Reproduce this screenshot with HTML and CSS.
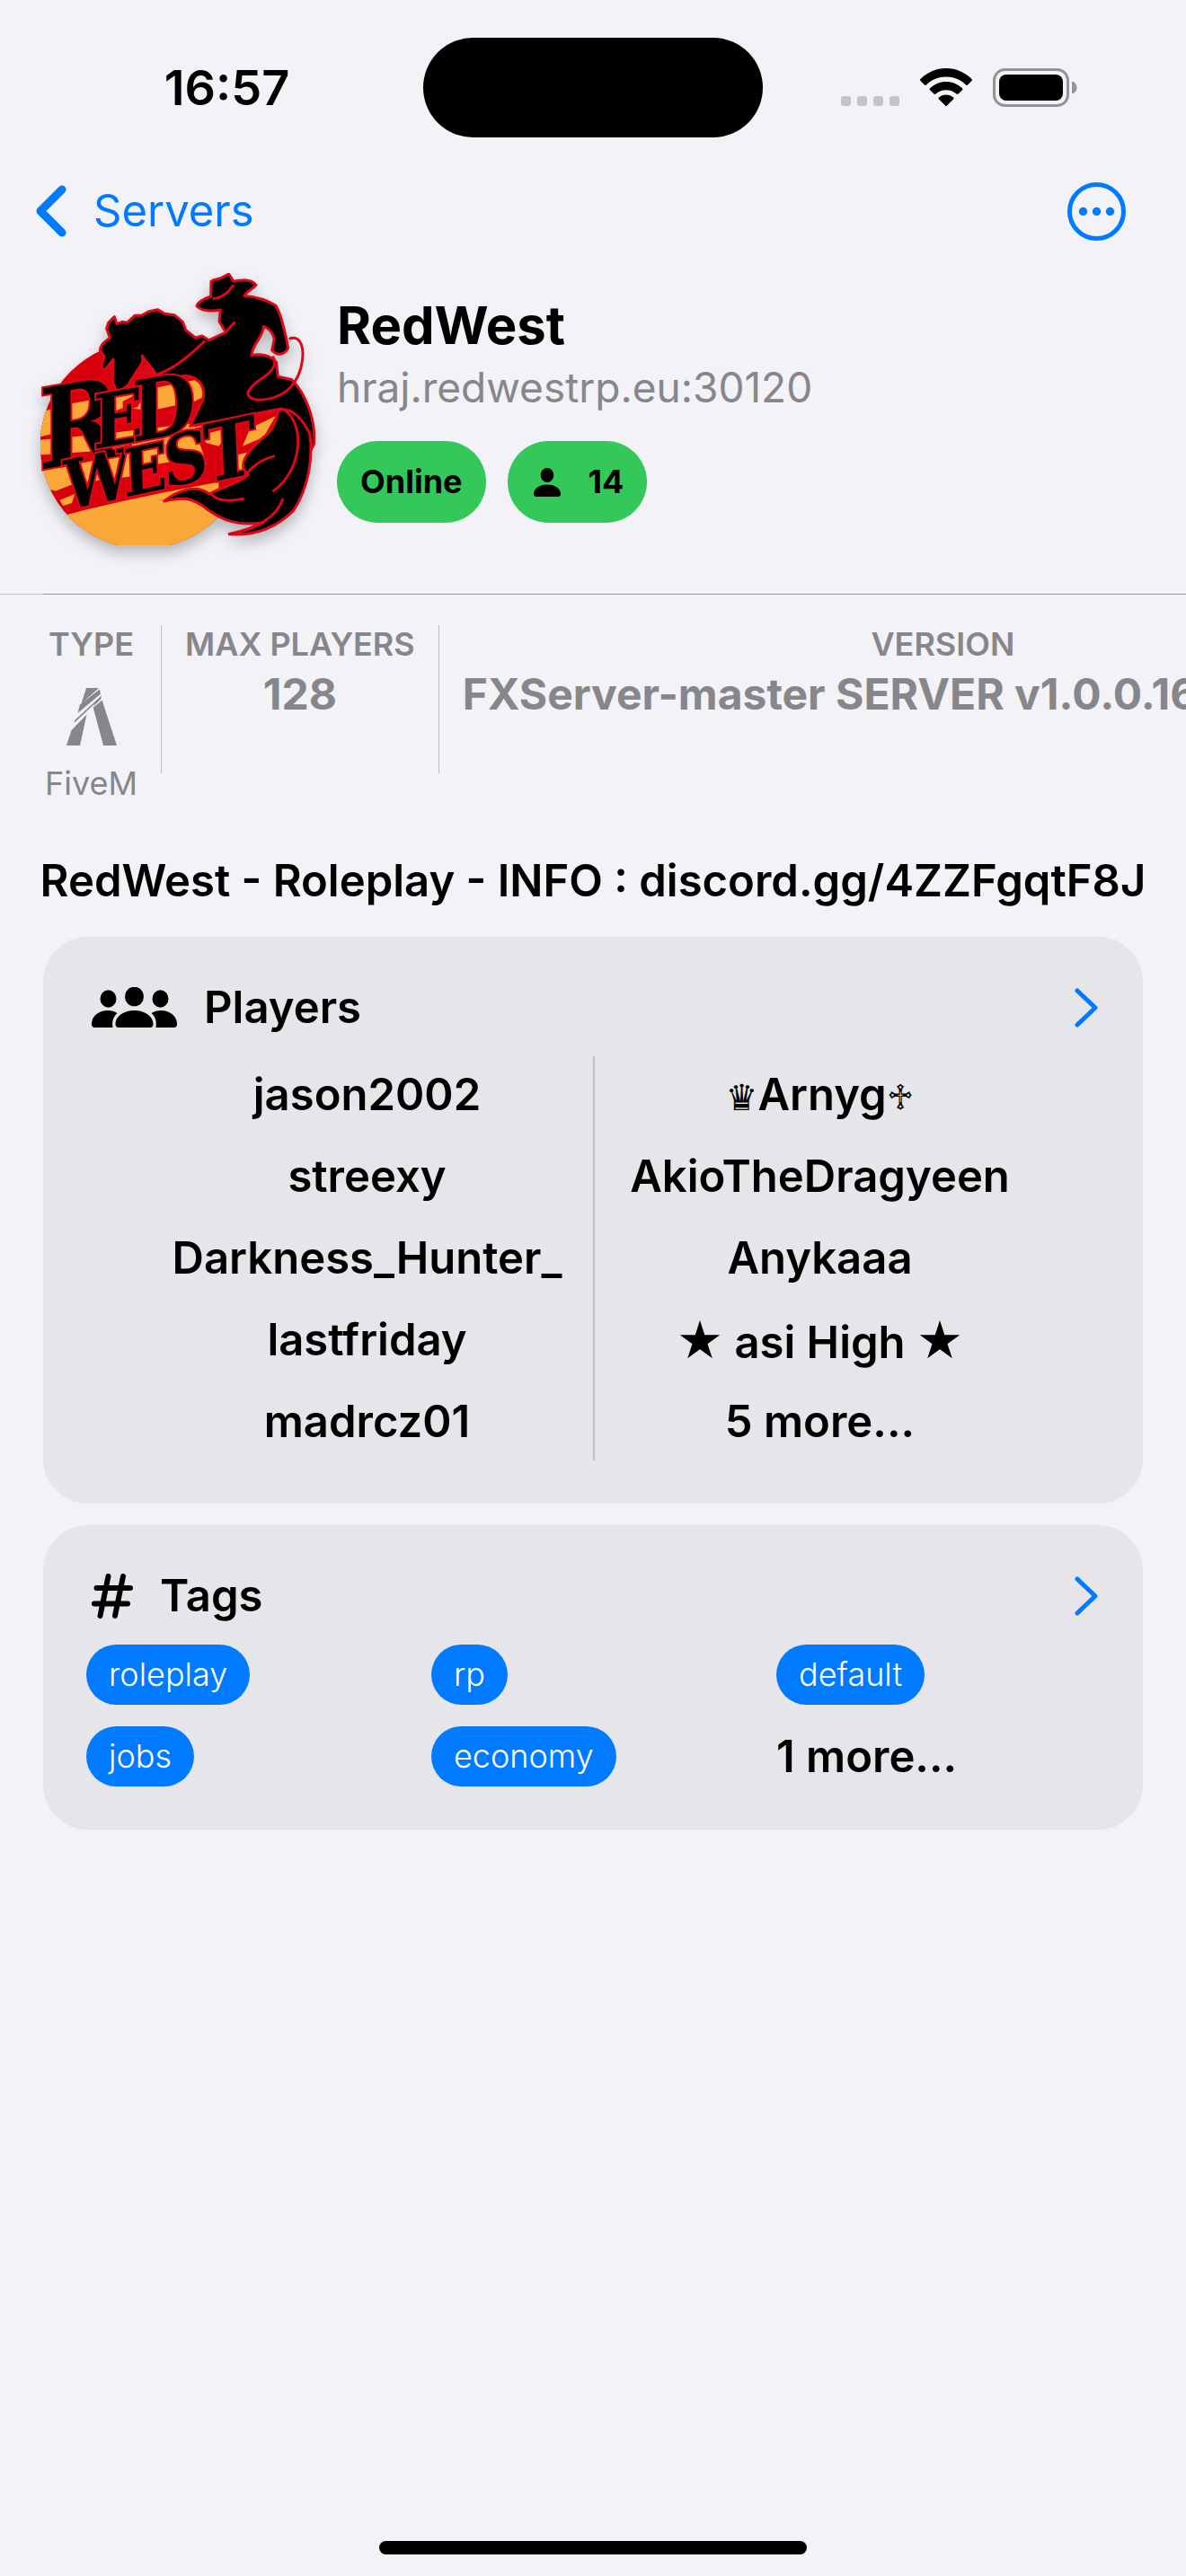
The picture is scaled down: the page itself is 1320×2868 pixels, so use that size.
FILE: index.html
```html
<!DOCTYPE html>
<html lang="en">
<head>
<meta charset="utf-8">
<meta name="viewport" content="width=device-width, initial-scale=1">
<title>RedWest</title>
<link rel="stylesheet" href="styles.css">
</head>
<body>
<header class="status">
  <time class="status-time">16:57</time>
  <div class="island"></div>
  <div class="status-icons">
    <svg class="cell" width="65" height="12" viewBox="0 0 65 12" aria-hidden="true"><rect width="11" height="11" rx="3"/><rect x="18" width="11" height="11" rx="3"/><rect x="36" width="11" height="11" rx="3"/><rect x="54" width="11" height="11" rx="3"/></svg>
    <svg class="wifi" width="58" height="43" viewBox="0 0 58 43" aria-hidden="true"><path d="M29 0C40 0 50 4.500 57.500 12Q58.500 13 57.500 14L53 18.500Q52 19.300 51 18.400C45 12.600 37.500 9.500 29 9.500S13 12.600 7 18.400Q6 19.300 5 18.500L.5 14Q-.5 13 .5 12C8 4.500 18 0 29 0Z"/><path d="M29 15C36 15 42 17.600 47 22.300Q48 23.300 47 24.300L42.500 28.600Q41.500 29.400 40.500 28.600C37.300 25.700 33.500 24.200 29 24.200S20.700 25.700 17.500 28.600Q16.500 29.400 15.500 28.600L11 24.300Q10 23.300 11 22.300C16 17.600 22 15 29 15Z"/><path d="M29 29.500C32.200 29.500 34.800 30.600 37 32.600Q38 33.600 37 34.600L30 41.600Q29 42.600 28 41.600L21 34.600Q20 33.600 21 32.600C23.200 30.600 25.800 29.500 29 29.500Z"/></svg>
    <svg class="battery" width="94" height="43" viewBox="0 0 94 43" aria-hidden="true"><rect x="1.500" y="1.500" width="82" height="40" rx="12" fill="none" stroke="#949497" stroke-width="3"/><rect x="7" y="7" width="71" height="29" rx="8"/><path d="M88 14.500C91.500 15.500 93.500 18 93.500 21.500S91.500 27.500 88 28.500Z" fill="#949497"/></svg>
  </div>
</header>

<nav class="nav">
  <a class="back" href="#servers"><svg width="34" height="58" viewBox="0 0 34 58" aria-hidden="true"><path d="M29 5 5 29 29 53"/></svg>Servers</a>
  <button class="more" type="button" aria-label="More"><svg width="65" height="65" viewBox="0 0 65 65" aria-hidden="true"><circle cx="32.500" cy="32.500" r="30" fill="none" stroke="currentColor" stroke-width="5"/><g fill="currentColor"><circle cx="17.500" cy="32.500" r="4.700"/><circle cx="32.500" cy="32.500" r="4.700"/><circle cx="47.500" cy="32.500" r="4.700"/></g></svg></button>
</nav>

<main>
  <section class="server">
    <svg class="logo" width="306" height="303" viewBox="45 42 918 909" role="img" aria-label="RedWest logo">
      <defs><clipPath id="sun"><circle cx="390" cy="616" r="346"/></clipPath></defs>
      <g clip-path="url(#sun)">
        <rect x="40" y="260" width="720" height="700" fill="#d9000d"/>
        <path fill="#fca838" d="M40 510 110 485 300 450 560 400 620 440 560 470 330 520 40 590ZM40 600 250 580 760 520 740 580 400 625 40 650ZM40 705 160 682 600 590 740 640 520 700 160 745 95 770 60 760ZM110 800 160 780 150 810 120 820ZM130 850C260 815 420 780 640 740V960H100Z"/>
        <path fill="#e8000f" d="M220 530 300 500 330 490 420 505 350 540 230 550ZM380 690 520 665 590 690 430 730 370 770ZM320 470 400 430 370 490 320 500Z"/>
      </g>
      <path d="M560 560 850 500 830 640 720 740 620 740Z" fill="#d9000d"/>
      <path d="M575 585 690 555 640 620 600 610ZM745 560 830 520 790 590 720 620ZM700 650 740 640 715 720 690 725Z" fill="#fca838"/>
      <g stroke="#dc0718" stroke-width="9" stroke-linejoin="round">
        <path d="M244 300C245 280 262 270 277 258L266 228 272 208 292 188 300 212 318 205 334 208 360 184 382 184 408 170 436 164 460 178 492 182 520 205 530 232 562 258 585 252 608 266 664 240 642 204 646 166C610 172 580 166 567 152 574 134 596 126 614 120L615 70C626 60 645 64 656 54L674 45 690 70C715 64 752 62 765 82 755 96 738 96 726 118 770 122 804 134 831 151 850 180 855 220 866 260L872 293C862 312 838 322 818 300L826 262C820 238 808 226 790 220 788 260 752 278 750 318 778 308 815 318 833 340L838 388 885 398C930 445 962 525 960 610L945 640 850 500 545 553 585 470C600 430 580 390 530 385L440 400 430 380C415 350 398 345 385 318 392 345 372 358 360 380L342 412 318 432 300 438 286 405 288 330 262 364 248 360 258 320Z"/>
        <path d="M342 408Q370 360 402 350L432 385Z" fill="#dc0718"/>
        <g fill="none">
          <path d="M272 440C350 430 400 395 450 375S545 315 595 268"/>
          <path d="M620 128Q660 125 690 82M665 238 695 205"/>
          <path d="M875 262C905 250 926 275 920 330 912 400 870 465 770 466 710 455 745 420 790 390 820 370 838 345 820 320"/>
        </g>
        <path d="M840 500C880 490 915 520 945 580 955 660 940 760 890 835 830 895 760 920 676 914 740 902 760 890 790 875 700 890 650 865 600 830 550 790 520 790 458 804 500 770 560 745 610 780 640 760 700 750 740 715 700 690 730 640 790 590 830 560 830 530 840 500Z"/>
        <g fill="none"><path d="M560 552 850 495C930 530 925 700 820 772M610 775Q640 815 725 795M725 725Q760 670 828 653M855 795Q825 885 672 914"/></g>
      </g>
      <g class="logo-word" stroke-width="12" paint-order="stroke">
        <text transform="translate(62 695) rotate(-10)" font-size="365">R</text>
        <text transform="translate(236 628) rotate(-10)" font-size="245">E</text>
        <text transform="translate(368 604) rotate(-10)" font-size="275">D</text>
        <text transform="translate(140 832) rotate(-12)" font-size="225">W</text>
        <text transform="translate(338 788) rotate(-12)" font-size="215">E</text>
        <text transform="translate(474 756) rotate(-12)" font-size="230">S</text>
        <text transform="translate(610 742) rotate(-12)" font-size="265">T</text>
      </g>
    </svg>
    <div class="server-text">
      <h1>RedWest</h1>
      <p class="address">hraj.redwestrp.eu:30120</p>
      <div class="badges">
        <span class="badge">Online</span>
        <span class="badge"><svg width="36" height="32" viewBox="0 0 36 32" aria-hidden="true"><ellipse cx="18" cy="8" rx="7.300" ry="8"/><path d="M6 32Q3 32 3 29C3 23 9.500 18.500 18 18.500S33 23 33 29Q33 32 30 32Z"/></svg>14</span>
      </div>
    </div>
  </section>

  <hr class="rule">

  <dl class="stats">
    <div class="stat"><dt>TYPE</dt><dd class="platform"><svg width="56" height="64" viewBox="0 0 56 64" aria-hidden="true"><path d="M22 0H36L16.500 17.500ZM36.800 1.500 38 6.500 12.500 28 15 18.500ZM38.300 9 38.600 10.500 8.500 39 9.500 35.500ZM38.500 12 28 22.500 38.500 8ZM29.800 22 39.600 13.500 56 64H41ZM22.500 29.500 15 64H0L5.500 47Z"/></svg>FiveM</dd></div>
    <div class="stat"><dt>MAX PLAYERS</dt><dd>128</dd></div>
    <div class="stat"><dt>VERSION</dt><dd>FXServer-master SERVER v1.0.0.16085 win32</dd></div>
  </dl>

  <p class="description">RedWest - Roleplay - INFO : discord.gg/4ZZFgqtF8J</p>

  <section class="card">
    <a class="card-head" href="#players">
      <svg width="95" height="46" viewBox="0 0 95 46" aria-hidden="true"><ellipse cx="18.500" cy="13" rx="9" ry="9.700"/><ellipse cx="76.500" cy="13" rx="9" ry="9.700"/><ellipse cx="47.500" cy="10.500" rx="10.500" ry="10.800"/><path d="M3.500 45Q0 45 0 41C0 33 7 26 18 26Q24 26 28.500 29C24 33 22.500 38 23.500 45ZM91.500 45Q95 45 95 41C95 33 88 26 77 26Q71 26 66.500 29C71 33 72.500 38 71.500 45ZM30 45Q26.500 45 26.500 41C26.500 33 35 26 47.500 26S68.500 33 68.500 41Q68.500 45 65 45Z"/></svg>
      <h2>Players</h2>
      <svg class="chevron" width="26" height="44" viewBox="0 0 26 44" aria-hidden="true"><path d="M3 3 23 22 3 41"/></svg>
    </a>
    <div class="players">
      <ul><li>jason2002</li><li>streexy</li><li>Darkness_Hunter_</li><li>lastfriday</li><li>madrcz01</li></ul>
      <ul><li><span class="glyph">♛</span>Arnyg<span class="glyph">♱</span></li><li>AkioTheDragyeen</li><li>Anykaaa</li><li><span class="star">★</span> asi High <span class="star">★</span></li><li>5 more...</li></ul>
    </div>
  </section>

  <section class="card">
    <a class="card-head" href="#tags">
      <svg width="46" height="50" viewBox="0 0 46 50" aria-hidden="true"><path d="M5.500 16H43M3 33.500H40M18.500 3 9.500 47M35 3 26 47" fill="none" stroke="#000" stroke-width="6" stroke-linecap="round"/></svg>
      <h2>Tags</h2>
      <svg class="chevron" width="26" height="44" viewBox="0 0 26 44" aria-hidden="true"><path d="M3 3 23 22 3 41"/></svg>
    </a>
    <ul class="tags"><li><span class="tag">roleplay</span></li><li><span class="tag">rp</span></li><li><span class="tag">default</span></li><li><span class="tag">jobs</span></li><li><span class="tag">economy</span></li><li class="tags-more">1 more...</li></ul>
  </section>
</main>

<footer class="home"><div class="home-bar"></div></footer>
</body>
</html>
```

FILE: styles.css
```css
* { box-sizing: border-box; margin: 0; padding: 0; }

body {
  display: flex;
  flex-direction: column;
  min-height: 100vh;
  background: #f2f2f7;
  color: #000;
  font-family: Inter, "Liberation Sans", "DejaVu Sans", sans-serif;
  font-size: 49px;
  line-height: 60px;
  overflow-x: hidden;
}

svg { display: block; flex: none; }
ul { list-style: none; }
a { color: inherit; text-decoration: none; }

/* Status bar */
.status {
  display: grid;
  grid-template-columns: 1fr 378px 1fr;
  align-items: center;
  height: 177px;
  padding: 18px 34px 0;
}
.status-time { text-align: center; font-size: 54px; font-weight: 600; }
.island { height: 111px; border-radius: 56px; background: #000; }
.status-icons { display: flex; justify-content: center; align-items: flex-end; gap: 23px; }
.cell { fill: #c3c3c8; }

/* Navigation */
.nav {
  display: flex;
  justify-content: space-between;
  align-items: center;
  height: 116px;
  padding: 0 67px 0 40px;
  color: #007aff;
}
.back { display: flex; align-items: center; gap: 30px; }
.back path, .chevron path {
  fill: none;
  stroke: #007aff;
  stroke-width: 9;
  stroke-linecap: round;
  stroke-linejoin: round;
}
.more { border: 0; background: none; color: inherit; cursor: pointer; }

/* Server header */
.server {
  display: flex;
  align-items: center;
  gap: 24px;
  padding: 11px 45px 54px;
}
.logo { filter: drop-shadow(0 8px 8px rgba(0, 0, 0, .25)); }
.logo-word {
  fill: #000;
  stroke: #dc0718;
  font-family: "DejaVu Serif Condensed", "DejaVu Serif", serif;
  font-style: italic;
  font-weight: 700;
}
.server-text { min-width: 0; }
h1 { font-size: 58px; line-height: 70px; font-weight: 700; }
.address { margin-top: 4px; font-size: 46px; color: #86868b; }
.badges { display: flex; gap: 24px; margin-top: 30px; padding-bottom: 2px; }
.badge {
  display: flex;
  align-items: center;
  gap: 28px;
  padding: 24px 26px;
  border-radius: 46px;
  background: #34c759;
  font-size: 36px;
  line-height: 43px;
  font-weight: 700;
}

.rule { height: 1px; border: 0; background: linear-gradient(90deg, #c4c4c8 48px, #95959b 48px); }

/* Stats strip, runs off the right edge */
.stats {
  display: flex;
  height: 234px;
  padding: 34px 0 0 24px;
  overflow: hidden;
  color: #86868b;
  white-space: nowrap;
}
.stat { flex: none; height: 165px; padding: 0 26px; text-align: center; }
.stat + .stat { border-left: 1px solid #b9b9be; }
dt { font-size: 36px; line-height: 42px; font-weight: 600; }
dd { margin-top: 6px; font-size: 48px; line-height: 58px; font-weight: 700; }
.platform {
  display: flex;
  flex-direction: column;
  align-items: center;
  gap: 19px;
  margin-top: 28px;
  font-size: 36px;
  line-height: 46px;
  font-weight: 400;
}
.platform svg { fill: currentColor; }

.description { margin: 55px 24px 32px; text-align: center; font-weight: 600; }

/* Cards */
.card { margin: 0 48px 24px; padding: 48px; border-radius: 50px; background: #e5e5ea; font-weight: 600; }
.card-head { display: flex; align-items: center; gap: 30px; height: 61px; padding-left: 6px; margin-bottom: 24px; }
h2 { font-size: 49px; line-height: 60px; font-weight: 600; }
.chevron { margin-left: auto; margin-right: 2px; }
.chevron path { stroke-width: 5; }

.players { display: grid; grid-template-columns: repeat(2, minmax(0, 503px)); justify-content: center; }
.players ul { display: flex; flex-direction: column; gap: 31px; padding: 13px 0; text-align: center; white-space: nowrap; }
.players ul + ul { border-left: 2px solid #c0c0c5; }
.players li { height: 60px; }
.glyph { font-family: "DejaVu Sans", sans-serif; font-size: 40px; font-weight: 400; }
.star { font-family: "DejaVu Sans", sans-serif; font-size: 58px; font-weight: 400; }

.tags { display: grid; grid-template-columns: repeat(3, minmax(0, 1fr)); gap: 24px; }
.tags li { display: flex; align-items: center; height: 67px; }
.tag {
  padding: 12px 25px;
  border-radius: 34px;
  background: #007aff;
  color: #fff;
  font-size: 36px;
  line-height: 43px;
  font-weight: 300;
}

/* Home indicator */
.home { display: flex; justify-content: center; margin-top: auto; padding-bottom: 24px; }
.home-bar { width: 36%; height: 15px; border-radius: 8px; background: #000; }
```
